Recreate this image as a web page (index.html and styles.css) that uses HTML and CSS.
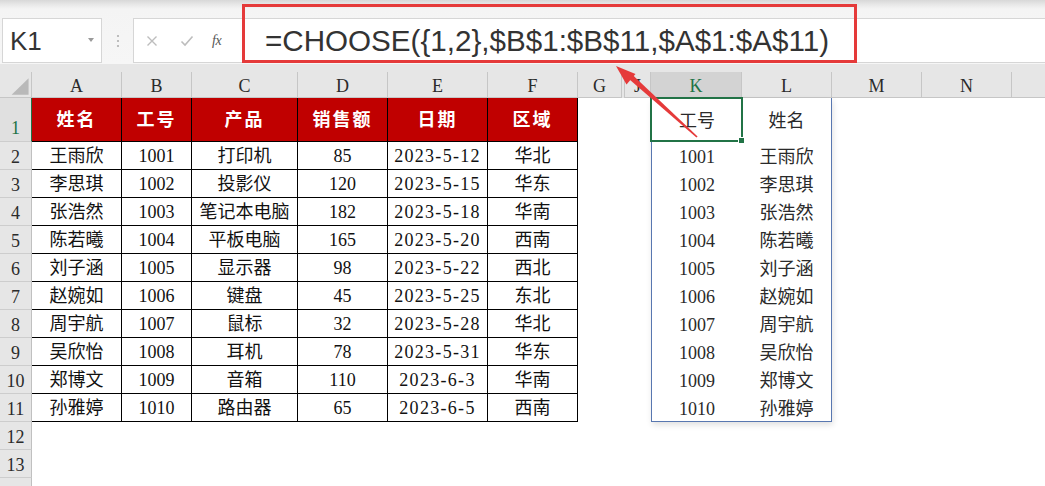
FILE: index.html
```html
<!DOCTYPE html>
<html lang="zh">
<head>
<meta charset="utf-8">
<title>CHOOSE</title>
<link rel="stylesheet" href="styles.css">
</head>
<body>
<div class="app">
  <div class="topbar">
    <div class="namebox"><span class="ref">K1</span><span class="dd"></span></div>
    <div class="dots">
      <svg width="4" height="14" viewBox="0 0 4 14"><circle cx="2" cy="2" r="1.1" fill="#b0b0b0"/><circle cx="2" cy="7" r="1.1" fill="#b0b0b0"/><circle cx="2" cy="12" r="1.1" fill="#b0b0b0"/></svg>
    </div>
    <div class="fwrap">
      <div class="fbtns">
        <svg class="ico" width="12" height="12" viewBox="0 0 12 12"><path d="M1.5 1.5 L10.5 10.5 M10.5 1.5 L1.5 10.5" stroke="#bdbdbd" stroke-width="1.4" fill="none"/></svg>
        <svg class="ico ok" width="14" height="12" viewBox="0 0 14 12"><path d="M1.5 6.5 L5 10 L12.5 1.5" stroke="#bdbdbd" stroke-width="1.6" fill="none"/></svg>
        <span class="fx">fx</span>
      </div>
      <div class="formula">=CHOOSE({1,2},$B$1:$B$11,$A$1:$A$11)</div>
    </div>
  </div>

  <div class="colhead">
    <div class="ch corner"><svg width="32" height="26" viewBox="0 0 32 26"><polygon points="29.5,6 29.5,23 12,23" fill="#b9b9b9"/></svg></div>
    <div class="ch wa">A</div>
    <div class="ch wb">B</div>
    <div class="ch wc">C</div>
    <div class="ch wd">D</div>
    <div class="ch we">E</div>
    <div class="ch wf">F</div>
    <div class="ch wg">G</div>
    <div class="ch wj">J</div>
    <div class="ch wk sel">K</div>
    <div class="ch wl">L</div>
    <div class="ch wm">M</div>
    <div class="ch wn">N</div>
    <div class="ch rest"></div>
  </div>

  <div class="grid">
    <div class="rowhead">
      <div class="rh first">1</div>
      <div class="rh">2</div>
      <div class="rh">3</div>
      <div class="rh">4</div>
      <div class="rh">5</div>
      <div class="rh">6</div>
      <div class="rh">7</div>
      <div class="rh">8</div>
      <div class="rh">9</div>
      <div class="rh">10</div>
      <div class="rh">11</div>
      <div class="rh">12</div>
      <div class="rh">13</div>
      <div class="rh"></div>
    </div>

    <div class="data">
      <div class="hd">姓名</div><div class="hd">工号</div><div class="hd">产品</div><div class="hd">销售额</div><div class="hd">日期</div><div class="hd">区域</div>
      <div>王雨欣</div><div>1001</div><div>打印机</div><div>85</div><div class="dt">2023-5-12</div><div>华北</div>
      <div>李思琪</div><div>1002</div><div>投影仪</div><div>120</div><div class="dt">2023-5-15</div><div>华东</div>
      <div>张浩然</div><div>1003</div><div>笔记本电脑</div><div>182</div><div class="dt">2023-5-18</div><div>华南</div>
      <div>陈若曦</div><div>1004</div><div>平板电脑</div><div>165</div><div class="dt">2023-5-20</div><div>西南</div>
      <div>刘子涵</div><div>1005</div><div>显示器</div><div>98</div><div class="dt">2023-5-22</div><div>西北</div>
      <div>赵婉如</div><div>1006</div><div>键盘</div><div>45</div><div class="dt">2023-5-25</div><div>东北</div>
      <div>周宇航</div><div>1007</div><div>鼠标</div><div>32</div><div class="dt">2023-5-28</div><div>华北</div>
      <div>吴欣怡</div><div>1008</div><div>耳机</div><div>78</div><div class="dt">2023-5-31</div><div>华东</div>
      <div>郑博文</div><div>1009</div><div>音箱</div><div>110</div><div class="dt">2023-6-3</div><div>华南</div>
      <div>孙雅婷</div><div>1010</div><div>路由器</div><div>65</div><div class="dt">2023-6-5</div><div>西南</div>
    </div>

    <div class="spacer"></div>

    <div class="pic">
      <div class="pg">
        <div class="p1">工号</div><div class="p1">姓名</div>
        <div>1001</div><div>王雨欣</div>
        <div>1002</div><div>李思琪</div>
        <div>1003</div><div>张浩然</div>
        <div>1004</div><div>陈若曦</div>
        <div>1005</div><div>刘子涵</div>
        <div>1006</div><div>赵婉如</div>
        <div>1007</div><div>周宇航</div>
        <div>1008</div><div>吴欣怡</div>
        <div>1009</div><div>郑博文</div>
        <div>1010</div><div>孙雅婷</div>
      </div>
      <div class="cursel"><span class="handle"></span></div>
    </div>
  </div>

  <div class="hilite"></div>
  <svg class="arrow" width="1045" height="486" viewBox="0 0 1045 486">
    <polygon points="629.5,79.5 633.2,75.6 697.6,136.6 696.4,137.4" fill="#e53a3a"/>
    <polygon points="616,66 635.5,74 626.5,84.5" fill="#e53a3a"/>
  </svg>
</div>
</body>
</html>
```

FILE: styles.css
```css
html, body {
  margin: 0;
  padding: 0;
  background: #fff;
}

body {
  font-family: "Liberation Serif", "Noto Sans CJK SC", serif;
  color: #111;
}

.app {
  position: relative;
  width: 1045px;
  height: 486px;
  overflow: hidden;
}

/* ---------- formula bar ---------- */
.topbar {
  height: 64px;
  box-sizing: border-box;
  padding-left: 2px;
  display: flex;
  align-items: flex-end;
  background: linear-gradient(#d8d8d8 0, #e9e9e9 5px, #f4f4f4 9px, #f6f6f6 100%);
}

.namebox {
  width: 100px;
  height: 45px;
  margin-bottom: 1px;
  box-sizing: border-box;
  border: 1px solid #d6d6d6;
  background: #fff;
  display: flex;
  align-items: center;
  justify-content: space-between;
  padding: 0 7px 0 7px;
}

.ref {
  font-family: "Liberation Sans", "Noto Sans", sans-serif;
  font-size: 26px;
  line-height: 1;
  color: #333;
}

.dd {
  width: 0;
  height: 0;
  border-top: 4px solid #9a9a9a;
  border-left: 3px solid transparent;
  border-right: 3px solid transparent;
  margin-top: -2px;
}

.dots {
  width: 31px;
  height: 45px;
  margin-bottom: 1px;
  display: flex;
  align-items: center;
  justify-content: center;
}

.fwrap {
  flex: 1;
  height: 45px;
  margin-bottom: 1px;
  box-sizing: border-box;
  border: 1px solid #d6d6d6;
  border-right: none;
  background: #fff;
  display: flex;
  align-items: center;
}

.fbtns {
  width: 106px;
  flex-shrink: 0;
  display: flex;
  align-items: center;
  padding-left: 12px;
  box-sizing: border-box;
}

.ico.ok {
  margin-left: 22px;
}

.fx {
  margin-left: 18px;
  font-family: "Liberation Serif", serif;
  font-style: italic;
  font-size: 14px;
  color: #555;
  letter-spacing: -0.5px;
}

.formula {
  padding-left: 25px;
  font-family: "Liberation Sans", "Noto Sans", sans-serif;
  font-size: 29.6px;
  line-height: 1;
  color: #333;
  white-space: nowrap;
}

/* ---------- column header ---------- */
.colhead {
  display: flex;
  height: 34px;
  box-sizing: border-box;
  padding-top: 8px;
  background: #e6e6e6;
}

.ch {
  height: 26px;
  box-sizing: border-box;
  border-right: 1px solid #c6c6c6;
  border-bottom: 1px solid #c6c6c6;
  display: flex;
  align-items: center;
  justify-content: center;
  padding-top: 3px;
  font-size: 18px;
  line-height: 1;
  color: #2b2b2b;
  flex-shrink: 0;
}

.corner { width: 32px; padding-top: 0; align-items: stretch; }
.wa { width: 90px; }
.wb { width: 70px; }
.wc { width: 106px; }
.wd { width: 90px; }
.we { width: 100px; }
.wf { width: 90px; }
.wg { width: 44px; }
.wj { width: 27px; margin-left: 2px; border-left: 1px solid #c6c6c6; }
.wk { width: 91px; }
.wl { width: 90px; }
.wm { width: 90px; }
.wn { width: 90px; }
.rest { flex: 1; border-right: none; }

.sel {
  background: #d3d3d3;
  color: #217346;
}

/* ---------- sheet body ---------- */
.grid {
  display: flex;
  align-items: flex-start;
}

.rowhead {
  width: 32px;
  flex-shrink: 0;
}

.rh {
  height: 28px;
  box-sizing: border-box;
  background: #e6e6e6;
  border-right: 1px solid #c0c0c0;
  border-bottom: 1px solid #cdcdcd;
  display: flex;
  align-items: flex-end;
  justify-content: center;
  padding-bottom: 3px;
  font-size: 18px;
  line-height: 1;
  color: #2b2b2b;
}

.rh.first {
  height: 44px;
  padding-bottom: 4px;
  color: #217346;
  background: #e0e0e0;
  border-right: 1px solid #217346;
}

.data {
  flex-shrink: 0;
  display: grid;
  grid-template-columns: 90px 70px 106px 90px 100px 90px;
  grid-template-rows: 44px repeat(10, 28px);
}

.data > div {
  box-sizing: border-box;
  border-right: 1px solid #000;
  border-bottom: 1px solid #000;
  display: flex;
  align-items: center;
  justify-content: center;
  padding-top: 1px;
  font-size: 18px;
  line-height: 1;
  color: #111;
  white-space: nowrap;
}

.data > .hd {
  background: #c00000;
  color: #fff;
  font-weight: bold;
  letter-spacing: 2px;
  padding-top: 0;
}

.data > .dt {
  letter-spacing: 1.3px;
}

.spacer {
  width: 73px;
  flex-shrink: 0;
}

.pic {
  position: relative;
  width: 181px;
  height: 324px;
  flex-shrink: 0;
  box-sizing: border-box;
  border: 1px solid #5877b0;
  border-top: none;
  background: #fff;
  box-shadow: 1px 3px 6px rgba(0, 0, 0, 0.12);
}

.pg {
  display: grid;
  grid-template-columns: 90px 89px;
  grid-template-rows: 44px repeat(10, 28px);
}

.pg > div {
  display: flex;
  align-items: center;
  justify-content: center;
  padding-top: 1px;
  font-size: 18px;
  line-height: 1;
  color: #2a2a2a;
}

.pg > .p1 {
  padding-top: 2px;
}

.cursel {
  position: absolute;
  left: -2px;
  top: -1px;
  width: 93px;
  height: 45px;
  box-sizing: border-box;
  border: 2px solid #217346;
}

.handle {
  position: absolute;
  right: -4px;
  bottom: -4px;
  width: 5px;
  height: 5px;
  background: #217346;
  border: 1px solid #fff;
}

/* ---------- annotations ---------- */
.hilite {
  position: absolute;
  left: 242px;
  top: 4px;
  width: 615px;
  height: 59px;
  box-sizing: border-box;
  border: 3px solid #e53a3a;
}

.arrow {
  position: absolute;
  left: 0;
  top: 0;
  pointer-events: none;
}
```
